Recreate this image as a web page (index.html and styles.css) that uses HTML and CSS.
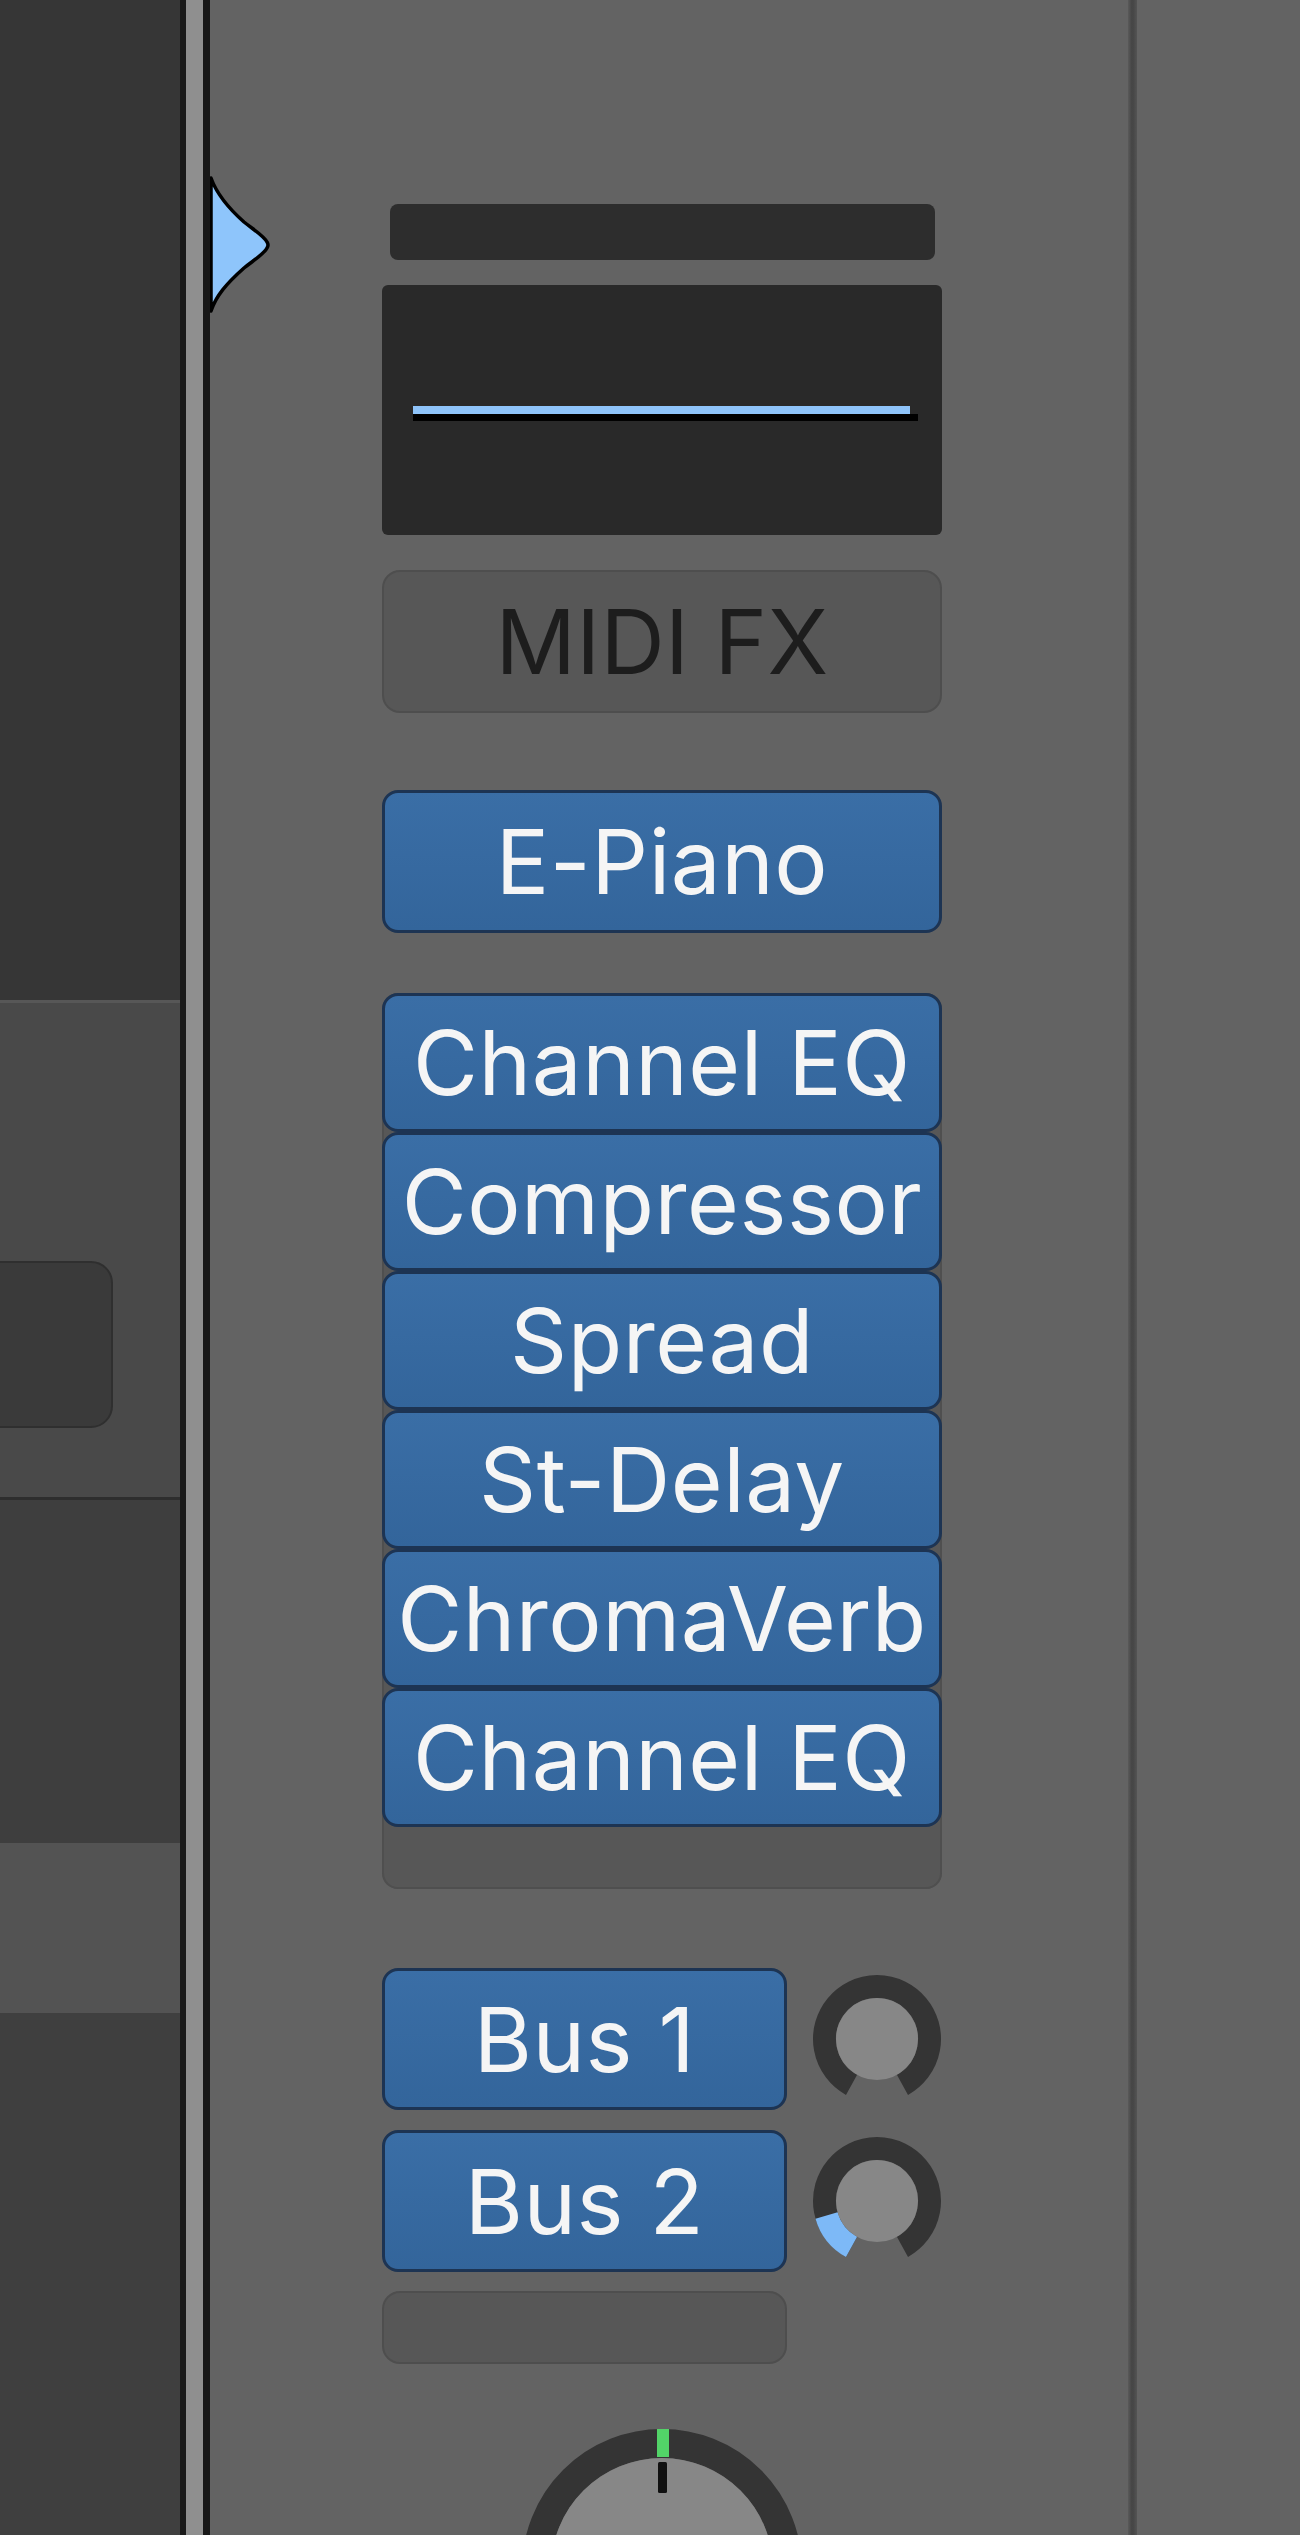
FILE: index.html
```html
<!DOCTYPE html>
<html lang="en">
<head>
    <meta charset="UTF-8">
    <meta name="viewport" content="width=device-width, initial-scale=1.0">
    <title>Channel Strip</title>
    <link rel="stylesheet" href="styles.css">
</head>
<body>
    <div class="mixer">
        <!-- Inspector side (left) -->
        <div class="sidebar">
            <div class="side-section top"></div>
            <div class="side-section middle">
                <div class="side-button"></div>
            </div>
            <div class="side-section lower"></div>
            <div class="side-section band"></div>
            <div class="side-section bottom"></div>
        </div>

        <div class="divider"></div>

        <!-- Channel strip -->
        <div class="strip">
            <svg class="fader-marker" width="70" height="150" viewBox="0 0 70 150">
                <path d="M1,6 C6,20 16,34 34,50 C44,58 54,64 57,70 Q59,73 57,76 C54,82 44,88 34,96 C16,112 6,124 1,139 Z" fill="#8ec5fb" stroke="#000" stroke-width="3.5" stroke-linejoin="round"/>
            </svg>

            <div class="column">
                <div class="name-bar"></div>

                <div class="eq-display">
                    <div class="eq-curve"></div>
                </div>

                <div class="slot midi-fx">MIDI FX</div>

                <div class="plugin instrument">E-Piano</div>

                <div class="inserts">
                    <div class="plugin">Channel EQ</div>
                    <div class="plugin">Compressor</div>
                    <div class="plugin">Spread</div>
                    <div class="plugin">St-Delay</div>
                    <div class="plugin">ChromaVerb</div>
                    <div class="plugin">Channel EQ</div>
                </div>

                <div class="sends">
                    <div class="send-row">
                        <div class="plugin send">Bus 1</div>
                        <svg class="knob" width="130" height="130" viewBox="0 0 130 130">
                            <path d="M39.55,110.92 A52.5,52.5 0 1 1 90.45,110.92" fill="none" stroke="#343434" stroke-width="23"/>
                            <circle cx="65" cy="65" r="41" fill="#878787"/>
                        </svg>
                    </div>
                    <div class="send-row">
                        <div class="plugin send">Bus 2</div>
                        <svg class="knob" width="130" height="130" viewBox="0 0 130 130">
                            <path d="M39.55,110.92 A52.5,52.5 0 1 1 90.45,110.92" fill="none" stroke="#343434" stroke-width="23"/>
                            <path d="M39.55,110.92 A52.5,52.5 0 0 1 14.53,79.47" fill="none" stroke="#7db9f7" stroke-width="23"/>
                            <circle cx="65" cy="65" r="41" fill="#878787"/>
                        </svg>
                    </div>
                    <div class="send-row">
                        <div class="slot send-empty"></div>
                    </div>
                </div>

                <div class="pan">
                    <svg width="290" height="290" viewBox="0 0 290 290">
                        <circle cx="145" cy="145" r="125.5" fill="none" stroke="#343434" stroke-width="29"/>
                        <circle cx="145" cy="145" r="111" fill="#878787"/>
                        <rect x="140" y="5" width="12" height="28" fill="#52d468"/>
                        <rect x="141" y="38" width="9" height="31" rx="1.5" fill="#111"/>
                    </svg>
                </div>
            </div>
        </div>

        <div class="separator"></div>

        <div class="next-strip"></div>
    </div>
</body>
</html>
```

FILE: styles.css
```css
body {
    margin: 0;
    padding: 0;
    background-color: #636363;
    font-family: 'Inter', 'Noto Sans', sans-serif;
    overflow: hidden;
}

.mixer {
    display: flex;
    width: 1300px;
    height: 2535px;
    overflow: hidden;
}

/* Left inspector */
.sidebar {
    width: 180px;
    display: flex;
    flex-direction: column;
    flex-shrink: 0;
}

.side-section.top {
    height: 1000px;
    background-color: #363636;
}

.side-section.middle {
    height: 497px;
    box-sizing: border-box;
    border-top: 3px solid #575757;
    background-color: #494949;
    padding-top: 258px;
}

.side-button {
    width: 143px;
    height: 167px;
    margin-left: -30px;
    box-sizing: border-box;
    border: 2px solid #2f2f2f;
    border-radius: 22px;
    background-color: #3a3a3a;
}

.side-section.lower {
    height: 346px;
    box-sizing: border-box;
    border-top: 3px solid #2e2e2e;
    background-color: #3e3e3e;
}

.side-section.band {
    height: 170px;
    background-color: #535353;
}

.side-section.bottom {
    flex: 1;
    background-color: #3f3f3f;
}

.divider {
    width: 30px;
    flex-shrink: 0;
    box-sizing: border-box;
    border-left: 6px solid #1a1a1a;
    border-right: 7px solid #171717;
    background-color: #8f8f8f;
}

/* Channel strip */
.strip {
    position: relative;
    width: 918px;
    flex-shrink: 0;
    box-sizing: border-box;
    padding-left: 172px;
}

.fader-marker {
    position: absolute;
    left: 0;
    top: 172px;
}

.column {
    width: 560px;
    display: flex;
    flex-direction: column;
}

.name-bar {
    height: 56px;
    margin: 204px 7px 0 8px;
    border-radius: 8px;
    background-color: #2d2d2d;
}

.eq-display {
    height: 250px;
    margin-top: 25px;
    box-sizing: border-box;
    padding: 121px 0 0 31px;
    border-radius: 6px;
    background-color: #292929;
}

.eq-curve {
    width: 505px;
    height: 15px;
    background:
        linear-gradient(#8ec3f9, #8ec3f9) 0 0 / 497px 8px no-repeat,
        linear-gradient(#000, #000) 0 8px / 505px 7px no-repeat;
}

.slot {
    box-sizing: border-box;
    border: 2px solid #4e4e4e;
    border-radius: 18px;
    background-color: #575757;
}

.midi-fx {
    height: 143px;
    margin-top: 35px;
    display: flex;
    align-items: center;
    justify-content: center;
    font-size: 89px;
    letter-spacing: 0.3px;
    line-height: 1;
    color: #1d1d1d;
}

.plugin {
    height: 139px;
    box-sizing: border-box;
    border: 3px solid #1d3453;
    border-radius: 16px;
    background: linear-gradient(#3a6ea6, #33659b);
    color: #f5f5f5;
    font-size: 89px;
    letter-spacing: 0.5px;
    line-height: 1;
    white-space: nowrap;
    display: flex;
    align-items: center;
    justify-content: center;
}

.instrument {
    height: 143px;
    margin-top: 77px;
}

.inserts {
    height: 896px;
    margin-top: 60px;
    box-sizing: border-box;
    border-radius: 16px;
    background-color: #575757;
    box-shadow: inset 0 0 0 2px #4f4f4f;
}

.sends {
    margin-top: 79px;
    display: flex;
    flex-direction: column;
    gap: 20px;
}

.send-row {
    display: flex;
    align-items: center;
    justify-content: space-between;
}

.plugin.send {
    width: 405px;
    height: 142px;
}

.send-empty {
    width: 405px;
    height: 73px;
    margin-top: -1px;
}

.knob {
    display: block;
}

.pan {
    margin-top: 60px;
    display: flex;
    justify-content: center;
}

.pan svg {
    display: block;
}

.separator {
    width: 9px;
    flex-shrink: 0;
    background: linear-gradient(to right, #5a5a5a, #464646 40%, #474747 60%, #545454);
}

.next-strip {
    flex: 1;
    background-color: #636363;
}
```
